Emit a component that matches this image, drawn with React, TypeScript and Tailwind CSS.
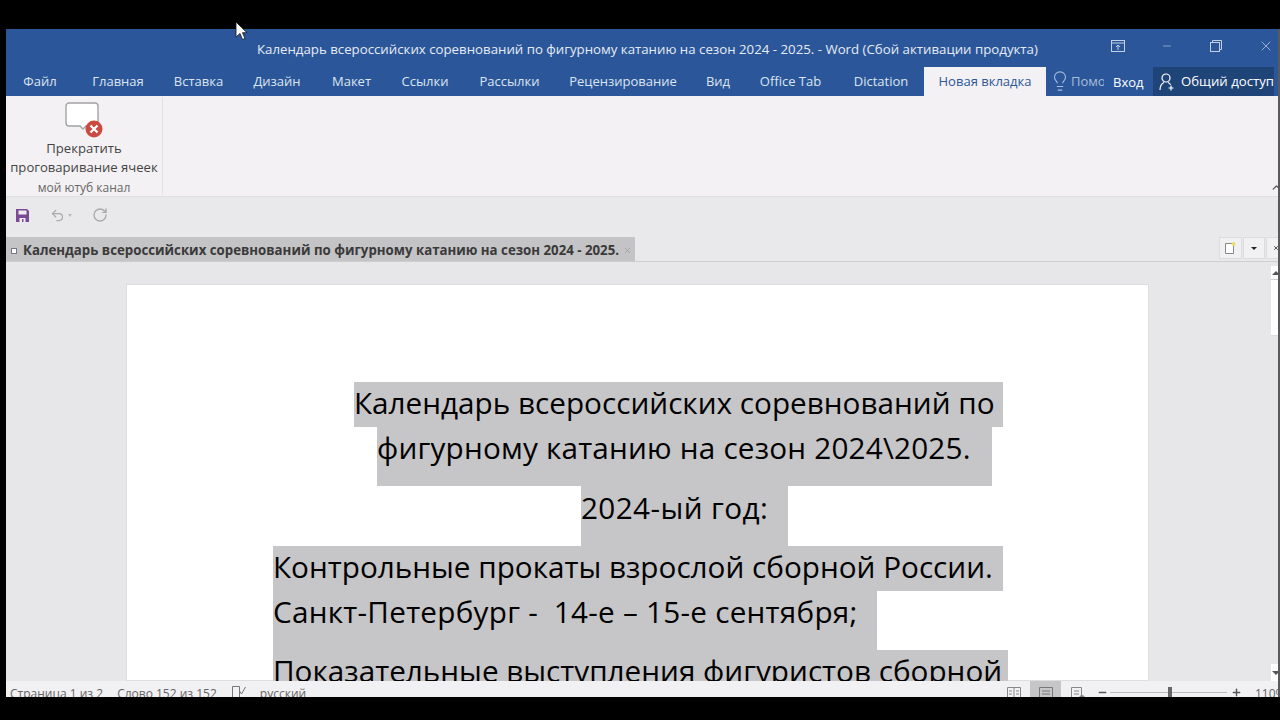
import { ChevronUp, Lightbulb, Minus, Plus, RotateCw, Undo2, X } from 'lucide-react'

const tabs = [
  { label: 'Файл', width: 'w-[68px]' },
  { label: 'Главная', width: 'w-[88px]' },
  { label: 'Вставка', width: 'w-[73px]' },
  { label: 'Дизайн', width: 'w-[84px]' },
  { label: 'Макет', width: 'w-[65px]' },
  { label: 'Ссылки', width: 'w-[82px]' },
  { label: 'Рассылки', width: 'w-[87px]' },
  { label: 'Рецензирование', width: 'w-[140px]' },
  { label: 'Вид', width: 'w-[50px]' },
  { label: 'Office Tab', width: 'w-[95px]' },
  { label: 'Dictation', width: 'w-[86px]' },
]

const lines = [
  { text: 'Календарь всероссийских соревнований по', box: 'ml-[227px] w-[649px] h-[45px]' },
  { text: 'фигурному катанию на сезон 2024\\2025.', box: 'ml-[250px] w-[615px] h-[59px] tracking-[0.2px]' },
  { text: '2024-ый год:', box: 'ml-[454px] w-[207px] h-[60px] pt-[1px] tracking-[0.4px]' },
  { text: 'Контрольные прокаты взрослой сборной России.', box: 'ml-[146px] w-[730px] h-[45px]' },
  { text: 'Санкт-Петербург -  14-е – 15-е сентября;', box: 'ml-[146px] w-[604px] h-[59px] tracking-[0.25px]' },
  { text: 'Показательные выступления фигуристов сборной', box: 'ml-[146px] w-[735px] h-[45px]' },
]

export default function App() {
  return (
    <div className="relative h-[720px] w-[1280px] overflow-hidden bg-black pl-[6px] pt-[29px] font-['Open_Sans','Noto_Sans',sans-serif]">
      <div className="relative flex h-[668px] w-[1274px] flex-col overflow-hidden bg-[#e8e7e9]">
        {/* Title bar */}
        <div className="flex h-[38px] items-center bg-[#2b579a] text-[#e6ebf3]">
          <div className="w-[1104px] pl-[251px] pt-[4px] text-[13.25px] whitespace-nowrap">
            Календарь всероссийских соревнований по фигурному катанию на сезон 2024 - 2025. - Word (Сбой активации продукта)
          </div>
          <div className="mb-[4px] flex w-[170px] items-center text-[#c3d0e3]">
            <svg className="ml-[1px] h-[12px] w-[14px]" viewBox="0 0 14 12" fill="none" stroke="currentColor">
              <rect x="0.5" y="0.5" width="13" height="11" />
              <path d="M0.5 3h13M7 10V5M5 7l2-2 2 2" />
            </svg>
            <Minus className="ml-[36px] h-[12px] w-[12px]" strokeWidth={1.2} />
            <svg className="ml-[37px] h-[12px] w-[12px]" viewBox="0 0 12 12" fill="none" stroke="currentColor">
              <rect x="0.5" y="2.5" width="9" height="9" />
              <path d="M2.5 2.5v-2h9v9h-2" />
            </svg>
            <X className="ml-[36px] h-[16px] w-[16px]" strokeWidth={1.1} />
          </div>
        </div>

        {/* Ribbon tabs */}
        <div className="flex h-[29px] bg-[#2b579a] text-[13px] text-[#dce4f0]">
          {tabs.map((tab) => (
            <div key={tab.label} className={`${tab.width} pt-[5px] text-center whitespace-nowrap`}>
              {tab.label}
            </div>
          ))}
          <div className="w-[122px] bg-[#f3f1f3] pt-[5px] text-center text-[#2b579a]">Новая вкладка</div>
          <div className="flex w-[60px] pt-[3px] text-[#a9bcd8]">
            <Lightbulb className="ml-[3px] h-[22px] w-[22px]" strokeWidth={1.2} />
            <span className="w-[33px] overflow-hidden pt-[2px]">Помощник</span>
          </div>
          <div className="w-[47px] pt-[6px] pl-[7px] text-white">Вход</div>
          <div className="flex w-[121px] items-center bg-[#1f4478] pl-[6px] text-[13.2px] text-white">
            <svg className="h-[18px] w-[16px]" viewBox="0 0 16 18" fill="none" stroke="currentColor" strokeWidth="1.2">
              <circle cx="7" cy="5" r="4" />
              <path d="M1 17c0-4 2-6.5 4-7.5M9 9.5c1 .4 2 1.2 2.6 2.2M12 12.5v5M9.5 15h5" />
            </svg>
            <span className="ml-[6px] whitespace-nowrap">Общий доступ</span>
          </div>
        </div>

        {/* Ribbon */}
        <div className="relative flex h-[101px] border-b border-[#dfdee0] bg-[#f3f1f3]">
          <div className="my-[1px] flex w-[157px] flex-col items-center border-r border-[#e2e1e3] text-[#444]">
            <svg className="ml-[3px] mt-[5px] h-[36px] w-[42px] shrink-0" viewBox="0 0 42 36" fill="none">
              <path d="M4 1h26a3 3 0 0 1 3 3v17a3 3 0 0 1-3 3H21l-3 3-3-3H4a3 3 0 0 1-3-3V4a3 3 0 0 1 3-3z" fill="#fff" stroke="#a3a3a5" strokeWidth="1.4" />
              <circle cx="29" cy="27" r="8.5" fill="#cb4b42" />
              <path d="M25.5 23.5l7 7M32.5 23.5l-7 7" stroke="#fff" strokeWidth="2.2" />
            </svg>
            <div className="mt-[1px] shrink-0 text-center text-[13.1px] leading-[19px] whitespace-nowrap">
              Прекратить
              <br />
              проговаривание ячеек
            </div>
            <div className="mt-[3px] shrink-0 text-[12px] leading-[16px] text-[#666]">мой ютуб канал</div>
          </div>
          <ChevronUp className="absolute right-[-3px] bottom-[2px] h-[13px] w-[13px] text-[#555]" strokeWidth={2.5} />
        </div>

        {/* Quick access */}
        <div className="flex h-[40px] items-center bg-[#e9e8ea] pb-[4px] pl-[10px]">
          <svg className="h-[13px] w-[13px]" viewBox="0 0 13 13">
            <path d="M0 0h11l2 2v11H0z" fill="#7a4a97" />
            <path d="M2.5 1.5h8v4h-8z" fill="#eee" />
            <path d="M3.5 9h6v4h-6z" fill="#eee" />
            <path d="M6 10h1.5v3H6z" fill="#7a4a97" />
          </svg>
          <Undo2 className="ml-[21px] h-[15px] w-[15px] text-[#aaa]" strokeWidth={2} />
          <span className="ml-[3px] h-0 w-0 border-x-[2.5px] border-t-[3px] border-x-transparent border-t-[#bbb]" />
          <RotateCw className="ml-[20px] h-[16px] w-[16px] text-[#aaa]" strokeWidth={2} />
        </div>

        {/* Document tabs */}
        <div className="flex h-[25px] items-stretch border-b border-[#cfcecf] bg-[#e9e8ea]">
          <div className="flex w-[629px] items-center bg-[#c4c3c5] pl-[5px] pt-[3px] text-[13.25px] font-bold text-[#3a3a3a]">
            <span className="h-[6px] w-[6px] border border-[#778] bg-white" />
            <span className="ml-[6px] whitespace-nowrap">Календарь всероссийских соревнований по фигурному катанию на сезон 2024 - 2025.</span>
            <X className="ml-[4px] h-[9px] w-[9px] text-[#999]" strokeWidth={2} />
          </div>
          <div className="ml-[584px] flex h-[22px] w-[23px] items-center justify-center self-start border border-[#dcdbdd] bg-[#f1f0f2]">
            <svg className="h-[12px] w-[11px]" viewBox="0 0 11 12" fill="none">
              <path d="M0.5 1.5h8v10h-8z" fill="#fff" stroke="#888" />
              <circle cx="8.5" cy="2" r="2" fill="#eedd66" />
            </svg>
          </div>
          <div className="ml-[1px] flex h-[22px] w-[22px] items-center justify-center self-start border border-[#dcdbdd] bg-[#f1f0f2]">
            <span className="h-0 w-0 border-x-[3px] border-t-[3px] border-x-transparent border-t-[#222]" />
          </div>
          <div className="ml-[1px] flex h-[22px] flex-1 items-center justify-end self-start border border-[#dcdbdd] bg-[#f1f0f2]">
            <X className="h-[8px] w-[6px] text-[#222]" strokeWidth={3} />
          </div>
        </div>

        {/* Document area */}
        <div className="flex min-h-0 flex-1 overflow-hidden bg-[#e7e6e8]">
          <div className="ml-[120px] mt-[22px] w-[1023px] shrink-0 border border-[#dedddf] bg-white pt-[97px] text-[29.7px] text-black">
            {lines.map((line) => (
              <div key={line.text} className={`${line.box} bg-[#c6c5c7] leading-[41px] whitespace-pre`}>
                {line.text}
              </div>
            ))}
          </div>
          <div className="ml-[122px] mt-[4px] flex w-[9px] flex-col bg-white">
            <div className="flex h-[14px] items-center justify-center border-b border-[#ccc]">
              <span className="h-0 w-0 border-x-[4px] border-b-[4px] border-x-transparent border-b-[#555]" />
            </div>
            <div className="h-[56px] border-b border-[#ddd]" />
            <div className="flex-1 bg-[#e7e6e8]" />
            <div className="flex h-[17px] items-center justify-center bg-white">
              <span className="h-0 w-0 border-x-[4px] border-t-[4px] border-x-transparent border-t-[#555]" />
            </div>
          </div>
        </div>

        {/* Status bar */}
        <div className="flex h-[16px] shrink-0 items-start overflow-hidden bg-[#f1f0f2] pl-[4px] text-[12px] leading-[18px] text-[#666]">
          <span className="mt-[4px] whitespace-nowrap">Страница 1 из 2</span>
          <span className="ml-[14px] mt-[4px] whitespace-nowrap">Слово 152 из 152</span>
          <svg className="ml-[15px] mt-[5px] h-[12px] w-[14px] shrink-0" viewBox="0 0 14 12" fill="none" stroke="#777">
            <path d="M0.5 0.5h7v11h-7zM7.5 5l2 3 4-7" />
          </svg>
          <span className="ml-[14px] mt-[4px] whitespace-nowrap">русский</span>
          <div className="ml-auto flex w-[273px] shrink-0 items-start">
            <svg className="mt-[6px] h-[14px] w-[14px] shrink-0" viewBox="0 0 14 14" fill="none" stroke="#888">
              <path d="M0.5 0.5h13v13h-13zM7 0.5v13M2 4h3M2 7h3M9 4h3M9 7h3" />
            </svg>
            <div className="ml-[9px] flex h-[16px] w-[31px] shrink-0 justify-center bg-[#c6c5c7] pt-[6px]">
              <svg className="h-[14px] w-[14px] shrink-0" viewBox="0 0 14 14" fill="none" stroke="#777">
                <path d="M0.5 0.5h13v13h-13zM3 4h8M3 7h8" />
              </svg>
            </div>
            <svg className="ml-[10px] mt-[6px] h-[14px] w-[14px] shrink-0" viewBox="0 0 14 14" fill="none" stroke="#888">
              <path d="M0.5 0.5h10v13h-10zM3 4h5M3 7h5" />
              <circle cx="11" cy="11" r="2.5" fill="#888" />
            </svg>
            <Minus className="ml-[12px] mt-[6px] h-[11px] w-[11px] shrink-0 text-[#555]" strokeWidth={3} />
            <div className="relative ml-[2px] mt-[11px] h-[1px] w-[117px] shrink-0 bg-[#bbb]">
              <span className="absolute left-[58px] top-[-5px] h-[14px] w-[4px] bg-[#666]" />
            </div>
            <Plus className="ml-[4px] mt-[6px] h-[11px] w-[11px] shrink-0 text-[#555]" strokeWidth={3} />
            <span className="ml-[13px] mt-[4px] whitespace-nowrap">110%</span>
          </div>
        </div>

        <div className="absolute top-0 right-0 bottom-0 w-[2px] bg-[#5a5a5c]" />
      </div>

      {/* Mouse pointer */}
      <svg className="absolute left-[235px] top-[21px] h-[20px] w-[13px]" viewBox="0 0 13 20">
        <path d="M1 1v15l4-3.5 2.5 6 2.5-1-2.5-5.8H12z" fill="#fff" stroke="#111" strokeWidth="0.8" />
      </svg>
    </div>
  )
}
